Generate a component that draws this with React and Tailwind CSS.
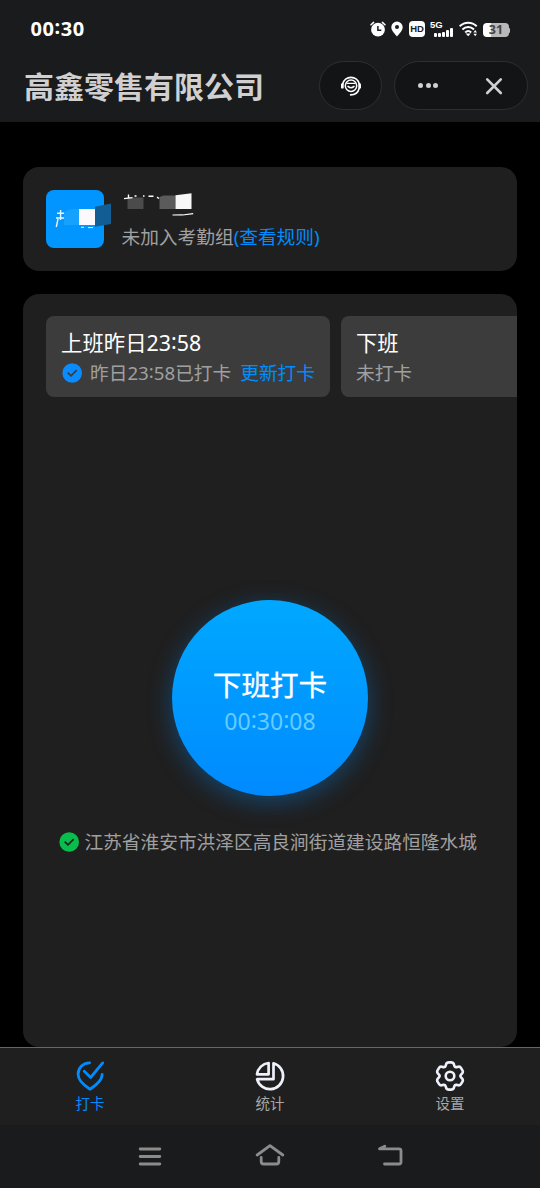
import React from 'react';

const FONT = "font-['Noto_Sans','Noto_Sans_CJK_SC',sans-serif]";

const tabs = [
    { id: 'punch', label: '打卡', active: true },
    { id: 'stats', label: '统计', active: false },
    { id: 'settings', label: '设置', active: false },
];

// Colons sit a little higher so they are centred on the digits
const Time = ({ value }) => (
    <>
        {value.split(/(:)/).map((part, i) => (
            part === ':' ? <span key={i} className="relative -top-[0.1em]">:</span> : part
        ))}
    </>
);

// Six-lobed gear outline around 0,0 with rounded corners
const gearPath = () => {
    const pts = [];
    for (let i = 0; i < 6; i++) {
        const a = (i * Math.PI) / 3;
        [[-3.3, -13.6], [3.3, -13.6], [4.9, -8.5]].forEach(([x, y]) => {
            pts.push([x * Math.cos(a) - y * Math.sin(a), x * Math.sin(a) + y * Math.cos(a)]);
        });
    }
    const mix = (p, q, t) => `${(p[0] + (q[0] - p[0]) * t).toFixed(2)} ${(p[1] + (q[1] - p[1]) * t).toFixed(2)}`;
    return pts.map((p, i) => {
        const prev = pts[(i + pts.length - 1) % pts.length];
        const next = pts[(i + 1) % pts.length];
        return `${i === 0 ? 'M' : 'L'}${mix(p, prev, 0.34)} Q${p[0].toFixed(2)} ${p[1].toFixed(2)} ${mix(p, next, 0.34)}`;
    }).join(' ') + 'Z';
};

const TabIcon = ({ id }) => {
    if (id === 'punch') {
        return (
            <svg width="30" height="30" viewBox="0 0 30 30" fill="none" stroke="#008cff" strokeWidth="2.8" strokeLinecap="round" strokeLinejoin="round">
                <path d="M14.6 1.8C7.6 2 3.1 7.2 3.1 13.3C3.1 19.6 8 23.8 15 28.2C22 23.8 27 19.4 27.2 13.4" />
                <path d="M9.3 10.3L15.6 16.5L27.7 1.9" />
            </svg>
        );
    }
    if (id === 'stats') {
        return (
            <svg width="30" height="30" viewBox="-15 -15 30 30" fill="none" stroke="#eef1fb" strokeWidth="2.7" strokeLinejoin="round">
                <path d="M3.5 -12.7A13.2 13.2 0 1 1 -12.9 3.2H3.5Z" />
                <path d="M-1.4 -13V-1.7H-13A13.1 13.1 0 0 1 -1.4 -13Z" />
            </svg>
        );
    }
    return (
        <svg width="30" height="30" viewBox="-15 -15 30 30" fill="none" stroke="#eef1fb" strokeWidth="2.6" strokeLinejoin="round">
            <path d={gearPath()} />
            <circle r="4.3" />
        </svg>
    );
};

const CheckBadge = ({ fill, tick }) => (
    <svg width="20" height="20" viewBox="0 0 20 20" fill="none" className="shrink-0">
        <circle cx="10.2" cy="10" r="9.8" fill={fill} />
        <path d="M5.7 9.6L9 12.8L14.7 7.2" stroke={tick} strokeWidth="1.7" />
    </svg>
);

const StatusBar = () => (
    <div className="flex h-[58px] items-center justify-between pl-[30.5px] pr-[30px]">
        <span className="text-[20px] font-bold leading-none tracking-[0.6px] text-white"><Time value="00:30" /></span>
        <div className="flex items-center text-white">
            <svg width="16" height="16" viewBox="0 0 16 16" className="mr-[5px]">
                <circle cx="8" cy="8.7" r="6.9" fill="#fff" />
                <path d="M1 3.8L3.6 1.4M15 3.8L12.4 1.4" stroke="#fff" strokeWidth="1.5" strokeLinecap="round" />
                <path d="M7.9 5V9.3H11.3" stroke="#1a1b1d" strokeWidth="1.5" fill="none" />
            </svg>
            <svg width="12" height="16" viewBox="0 0 12 16" className="mr-[6px]">
                <path d="M6 .6A5.7 5.7 0 0 0 .3 6.2C.3 9.6 4 12.8 6 15.5C8 12.8 11.7 9.6 11.7 6.2A5.7 5.7 0 0 0 6 .6Z" fill="#fff" />
                <circle cx="6" cy="6" r="2" fill="#1a1b1d" />
            </svg>
            <div className="mr-[5px] flex h-4 w-4 items-center justify-center rounded-[4px] bg-white pb-px font-['Liberation_Sans',sans-serif] text-[9.5px] font-bold leading-none text-[#1a1b1d]">HD</div>
            <div className="relative mr-[6px] h-4 w-[23px]">
                <span className="absolute left-0 -top-px font-['Liberation_Sans',sans-serif] text-[9.5px] font-bold leading-[10px]">5G</span>
                <div className="absolute bottom-0 right-0 flex items-end gap-[1px]">
                    <span className="h-1 w-[3px] rounded-[1px] bg-white" />
                    <span className="h-1 w-[3px] rounded-[1px] bg-white" />
                    <span className="h-[5px] w-[3px] rounded-[1px] bg-white" />
                    <span className="h-[7px] w-[3px] rounded-[1px] bg-white" />
                    <span className="h-[9px] w-[3px] rounded-[1px] bg-white" />
                </div>
            </div>
            <svg width="19" height="16" viewBox="0 0 19 16" className="mr-[5px]" fill="none" stroke="#fff" strokeWidth="2">
                <path d="M.7 5.3C5.6 .6 12.8 .6 17.7 5.3" />
                <path d="M3.4 8.5C6.8 5.2 11.6 5.2 15 8.5" />
                <path d="M6.2 11.4C8 9.8 10.4 9.8 12.2 11.4" />
                <path d="M6.6 12.4L9.2 15.2L11.8 12.4Z" fill="#fff" stroke="none" />
                <path d="M14.4 11.4L16.2 9L18 11.4ZM14.4 12.8L16.2 15.2L18 12.8Z" fill="#fff" stroke="none" />
            </svg>
            <div className="mt-0.5 flex items-center">
                <div className="flex h-[14px] w-[26px] items-center justify-center rounded-[4px] bg-[linear-gradient(90deg,#fff_31%,#b9b9b9_31%)] text-[12.5px] font-bold leading-none text-[#444]">31</div>
                <span className="h-[5px] w-px rounded-r bg-[#b9b9b9]" />
            </div>
        </div>
    </div>
);

const Header = () => (
    <div className="flex h-16 items-start justify-between pl-6 pr-3">
        <h1 className="text-[30px] font-bold leading-[58px] text-[#d0d0d0]">高鑫零售有限公司</h1>
        <div className="mt-[3px] flex gap-3">
            <div className="flex h-[49px] w-[63px] items-center justify-center rounded-full border border-[#2e2f31] bg-[#131416]">
                <svg width="22" height="22" viewBox="0 0 22 22" fill="none" stroke="#fff" strokeLinecap="round">
                    <path d="M2.7 9A8.5 8.5 0 0 1 19.3 9M19.2 13.2C18.2 17.4 15.4 19.8 10.6 19.9" strokeWidth="1.6" />
                    <rect x="1" y="8.2" width="2.7" height="5.4" rx="1.2" fill="#fff" stroke="none" />
                    <rect x="18.3" y="8.2" width="2.7" height="5.4" rx="1.2" fill="#fff" stroke="none" />
                    <circle cx="11" cy="10.8" r="5.7" strokeWidth="1.5" />
                    <path d="M7 8.4H15" strokeWidth="1.2" />
                    <path d="M8 11.4Q11 14 14 11.4" strokeWidth="1.5" />
                </svg>
            </div>
            <div className="flex h-[49px] w-[134px] items-center justify-between rounded-full border border-[#2e2f31] bg-[#131416] pl-[23px] pr-[24px]">
                <div className="flex gap-[2.5px]">
                    <span className="h-[5px] w-[5px] rounded-full bg-[#d0d0d0]" />
                    <span className="h-[5px] w-[5px] rounded-full bg-[#d0d0d0]" />
                    <span className="h-[5px] w-[5px] rounded-full bg-[#d0d0d0]" />
                </div>
                <svg width="18" height="18" viewBox="0 0 18 18" stroke="#d0d0d0" strokeWidth="2.6" strokeLinecap="round">
                    <path d="M2.2 2.4L15.8 16M15.8 2.4L2.2 16" />
                </svg>
            </div>
        </div>
    </div>
);

const ProfileCard = () => (
    <div className="flex h-[104px] rounded-2xl bg-[#1f1f1f] px-[23px] pt-[23px]">
        <div className="h-[58px] w-[58px] shrink-0 rounded-lg bg-[#0095ff]">
            {/* mosaic over the initials */}
            <svg width="66" height="58" viewBox="46 190 66 58" className="block max-w-none">
                <path d="M60.6 210V220M57 213.2H64M56 218H64M58 219L56.3 227" stroke="#e9f6ff" strokeWidth="1.4" fill="none" />
                <path d="M81 227.3H84M88 227.6H93" stroke="#e9f6ff" strokeWidth="1" />
                <path d="M64 225V213Q67 209 73 209H79V225Z" fill="#16a1ff" />
                <path d="M79 209H95V225H79Z" fill="#fbf9fb" />
                <path d="M95 206.7L111 203.6V224L95 226.7Z" fill="#125d93" />
            </svg>
        </div>
        <div className="ml-[17.5px]">
            <svg width="74" height="26" viewBox="121.5 190 74 26" className="block">
                <path d="M127 209V198.5L132 197.5H143V209Z" fill="#4b4b4b" />
                <path d="M159 209V197L163 195.5H175V209Z" fill="#5b5b5b" />
                <path d="M175 195.2L191 193.2V209H175Z" fill="#f7f7f7" />
                <path d="M123.5 198.6L132 197.6M128 194.5V198M134 196H136M142.5 196H144M148 196.3H153M156.5 197.2L158.5 198.5" stroke="#fff" strokeWidth="1.4" fill="none" />
                <path d="M172 215L182 214.8M182 215L192.7 213.7" stroke="#fff" strokeWidth="1.2" fill="none" />
            </svg>
            <p className="mt-[7px] text-[18.7px] leading-7 text-[#a0a0a0]">
                未加入考勤组<a className="text-[#008cff]">(查看规则)</a>
            </p>
        </div>
    </div>
);

const ShiftCards = () => (
    <div className="flex gap-[11px] overflow-hidden pl-[23px]">
        <div className="h-[81px] w-[284px] shrink-0 rounded-lg bg-[#3c3c3c] pl-[15px] pt-3">
            <p className="whitespace-nowrap text-[21.4px] leading-[30px] text-white">上班昨日<Time value="23:58" /></p>
            <div className="ml-px mt-px flex items-center whitespace-nowrap text-[18.7px] leading-7">
                <CheckBadge fill="#0a8cff" tick="#3c3c3c" />
                <span className="ml-2 text-[#a0a0a0]">昨日<Time value="23:58" />已打卡</span>
                <span className="ml-[9px] text-[#008cff]">更新打卡</span>
            </div>
        </div>
        <div className="h-[81px] w-[284px] shrink-0 rounded-lg bg-[#3c3c3c] pl-[15px] pt-3">
            <p className="text-[21.3px] leading-[30px] text-white">下班</p>
            <p className="mt-px text-[18.7px] leading-7 text-[#a0a0a0]">未打卡</p>
        </div>
    </div>
);

const TabBar = () => (
    <nav className="flex h-[78px] border-t border-[#666] bg-[#1f1f1f]">
        {tabs.map((tab) => (
            <div key={tab.id} className="flex flex-1 flex-col items-center pt-[13px]">
                <TabIcon id={tab.id} />
                <span className={`mt-[2px] text-[14.5px] leading-5 ${tab.active ? 'text-[#008cff]' : 'text-[#a8a8a8]'}`}>
                    {tab.label}
                </span>
            </div>
        ))}
    </nav>
);

const SystemNav = () => (
    <div className="flex h-[63px] items-center justify-center gap-[90px] bg-[#1a1b1d] pb-px">
        <svg width="30" height="24" viewBox="0 0 30 24" stroke="#8c8c8c" strokeWidth="2.9" strokeLinecap="round">
            <path d="M5.2 5H24.8M5.2 12.5H24.8M5.2 20H24.8" />
        </svg>
        <svg width="30" height="24" viewBox="0 0 30 24" fill="none" stroke="#8c8c8c" strokeWidth="2.8" strokeLinecap="round" strokeLinejoin="round">
            <path d="M2.2 11L15 1.6L27.8 11" />
            <path d="M6.2 13.5V17.5Q6.2 20 8.7 20H21.3Q23.8 20 23.8 17.5V13.5" />
        </svg>
        <svg width="30" height="24" viewBox="0 0 30 24" fill="none" stroke="#8c8c8c" strokeWidth="2.8" strokeLinecap="round" strokeLinejoin="round">
            <path d="M9.8 2.2L4.5 4.8H24Q26 4.8 26 6.8V18Q26 20 24 20H9.5" />
        </svg>
    </div>
);

export default function App() {
    return (
        <div className={`flex h-[1188px] w-[540px] flex-col overflow-hidden bg-black ${FONT}`}>
            <header className="h-[122px] shrink-0 bg-[#1a1b1d]">
                <StatusBar />
                <Header />
            </header>

            <main className="flex flex-1 flex-col gap-[23px] px-[23px] pt-[45px]">
                <ProfileCard />
                <section className="flex flex-1 flex-col overflow-hidden rounded-2xl bg-[#1f1f1f] pt-[22px]">
                    <ShiftCards />
                    <button className="mt-[203px] flex h-[196px] w-[196px] flex-col items-center self-center rounded-full bg-linear-to-b from-[#00a8ff] to-[#008aff] pt-[65px] shadow-[0_6px_24px_rgba(0,140,255,0.36)]">
                        <span className="text-[28.6px] font-normal leading-10 text-white [-webkit-text-stroke:0.3px_#fff]">下班打卡</span>
                        <span className="text-[23px] leading-8 text-[#66ccff]"><Time value="00:30:08" /></span>
                    </button>
                    <div className="mt-8 flex items-center pl-9 text-[18.7px] leading-7 text-[#a0a0a0]">
                        <CheckBadge fill="#08bd4b" tick="#1f1f1f" />
                        <span className="ml-[5.5px] whitespace-nowrap">江苏省淮安市洪泽区高良涧街道建设路恒隆水城</span>
                    </div>
                </section>
            </main>

            <TabBar />
            <SystemNav />
        </div>
    );
}
